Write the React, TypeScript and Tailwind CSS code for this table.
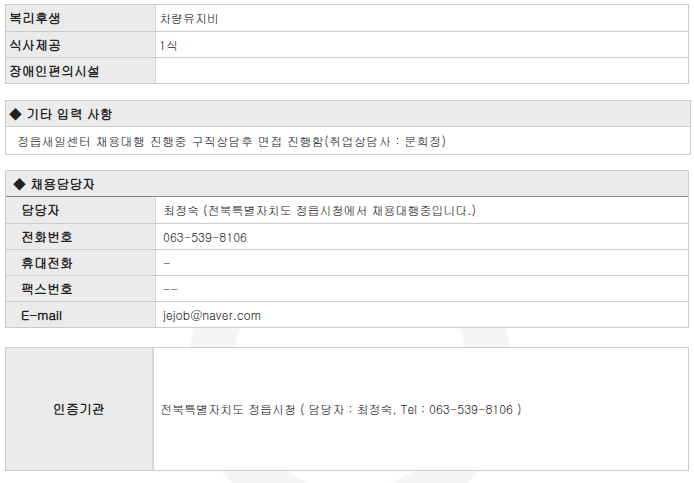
import React from "react";

const FONT = "font-['Gulim','Dotum','Noto_Sans_CJK_KR',sans-serif]";

const welfare = [
  { label: "복리후생", value: "차량유지비" },
  { label: "식사제공", value: "1식" },
  { label: "장애인편의시설", value: "" },
];

const contacts = [
  { label: "담당자", value: "최정숙 (전북특별자치도 정읍시청에서 채용대행중입니다.)" },
  { label: "전화번호", value: "063-539-8106" },
  { label: "휴대전화", value: "-" },
  { label: "팩스번호", value: "--" },
  { label: "E-mail", value: "jejob@naver.com" },
];

function Watermark() {
  return (
    <svg
      className="absolute left-0 top-0 pointer-events-none"
      width="694"
      height="483"
      viewBox="0 0 694 483"
    >
      <circle cx="350" cy="372" r="140" fill="none" stroke="#f5f5f5" strokeWidth="44" />
    </svg>
  );
}

export default function App() {
  return (
    <div className={`relative w-[694px] h-[483px] bg-white overflow-hidden text-[#222] ${FONT}`}>
      <Watermark />

      <div className="relative flex flex-col pt-[4px] pl-[5px]">
        {/* 복리후생 */}
        <div className="w-[684px] border border-[#cccccc]">
          {welfare.map((row, i) => (
            <div
              key={row.label}
              className={`flex h-[26px] ${i > 0 ? "border-t border-[#cccccc]" : ""}`}
            >
              <div className="w-[150px] shrink-0 bg-[#ebebeb] border-r border-[#d6d6d6] flex items-center pl-[3px] text-[13px] font-bold">
                {row.label}
              </div>
              <div className="flex-1 bg-white flex items-center pl-[3px] text-[12px]">
                {row.value}
              </div>
            </div>
          ))}
        </div>

        {/* 기타 입력 사항 */}
        <div className="mt-[16px] w-[686px] border border-[#cccccc]">
          <div className="h-[26px] bg-[#ebebeb] border-b border-[#cccccc] flex items-center pl-[3px] text-[13px] font-bold">
            ◆ 기타 입력 사항
          </div>
          <div className="h-[27px] bg-white flex items-center pl-[11px] text-[12px] tracking-[0.4px]">
            정읍새일센터 채용대행 진행중 구직상담후 면접 진행함(취업상담사 : 문희정)
          </div>
        </div>

        {/* 채용담당자 */}
        <div className="mt-[15px] w-[684px] border border-[#cccccc]">
          <div className="h-[26px] bg-[#ebebeb] border-b border-[#888888] flex items-center pl-[7px] text-[13px] font-bold">
            ◆ 채용담당자
          </div>
          {contacts.map((row, i) => (
            <div
              key={row.label}
              className={`flex h-[26px] ${i > 0 ? "border-t border-[#cccccc]" : ""}`}
            >
              <div className="w-[150px] shrink-0 bg-[#ebebeb] border-r border-[#d6d6d6] flex items-center pl-[15px] text-[13px] font-bold">
                {row.label}
              </div>
              <div className="flex-1 bg-white flex items-center pl-[7px] text-[12px]">
                {row.value}
              </div>
            </div>
          ))}
        </div>

        {/* 인증기관 */}
        <div className="mt-[19px] w-[684px] h-[124px] flex border border-[#cccccc]">
          <div className="w-[148px] shrink-0 bg-[#ebebeb] border-r-2 border-[#d6d6d6] flex items-center justify-center text-[13px] font-bold">
            인증기관
          </div>
          <div className="flex-1 bg-white flex items-center pl-[6px] text-[12px]">
            전북특별자치도 정읍시청 ( 담당자 : 최정숙, Tel : 063-539-8106 )
          </div>
        </div>
      </div>
    </div>
  );
}
